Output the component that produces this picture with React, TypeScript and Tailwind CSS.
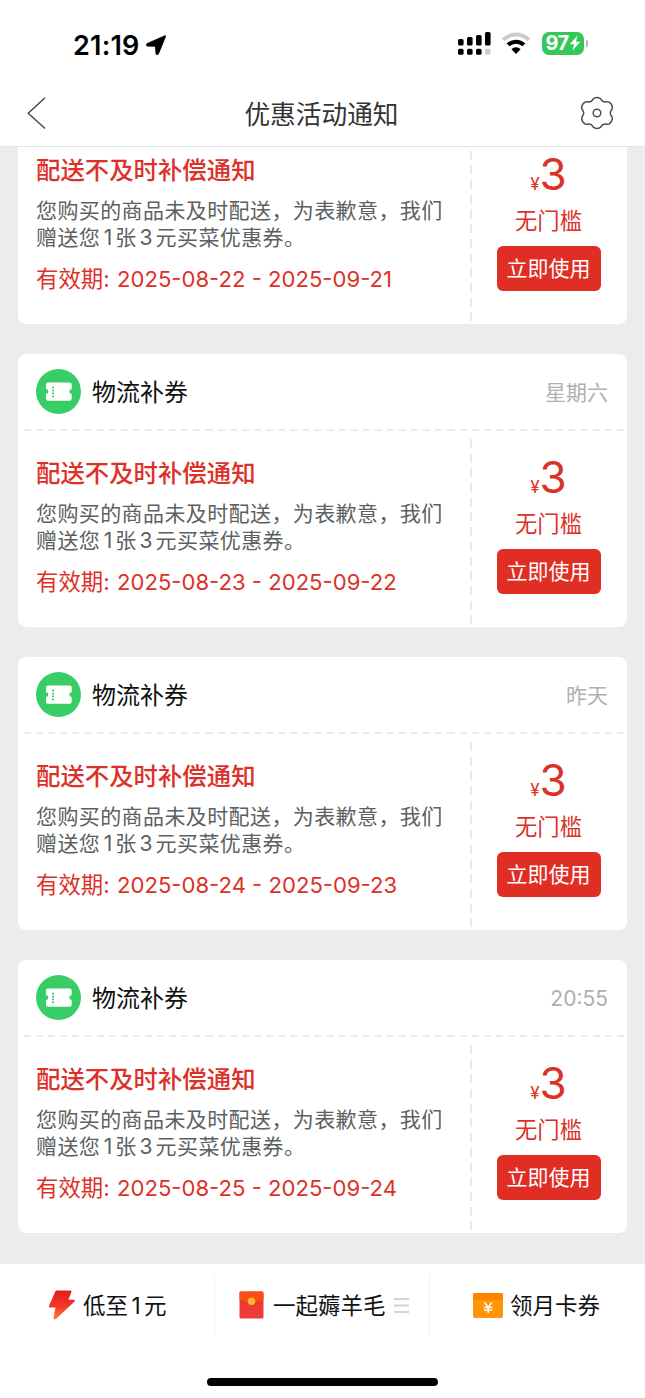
import React from "react";

type Notice = { time?: string; from: string; to: string };

const notices: Notice[] = [
  { from: "2025-08-22", to: "2025-09-21" },
  { time: "星期六", from: "2025-08-23", to: "2025-09-22" },
  { time: "昨天", from: "2025-08-24", to: "2025-09-23" },
  { time: "20:55", from: "2025-08-25", to: "2025-09-24" },
];

function StatusBar() {
  return (
    <div className="flex h-[80px] items-start justify-between bg-white pl-[73px] pr-[57px]">
      <div className="flex items-center pt-[30px]">
        <span className="w-[70px] whitespace-nowrap pt-[2px] text-[27px] font-semibold leading-[28px] tracking-[0.2px] text-black">21:19</span>
        <svg className="ml-[2px]" width="23" height="23" viewBox="0 0 23 23">
          <path d="M19.9 2.4 2.4 10.2Q1.8 11.2 3 11.4L11 11.7 11.6 19.3Q12 20.5 12.9 19.4Z" fill="#000" stroke="#000" strokeWidth="2.2" strokeLinejoin="round" />
        </svg>
      </div>
      <div className="flex items-center pt-[31px]">
        <svg width="34" height="24" viewBox="0 0 34 24">
          <g fill="#000">
            <rect x="0" y="8" width="5.6" height="6.6" rx="1.6" />
            <rect x="9" y="6" width="5.6" height="8.6" rx="1.6" />
            <rect x="18" y="4" width="5.6" height="10.6" rx="1.6" />
            <rect x="27" y="1" width="5.6" height="13.6" rx="1.6" />
            <rect x="0" y="17.8" width="5.6" height="6" rx="1.6" />
            <rect x="9" y="17.8" width="5.6" height="6" rx="1.6" />
            <rect x="18" y="17.8" width="5.6" height="6" rx="1.6" />
          </g>
          <rect x="27" y="17.8" width="5.6" height="6" rx="1.6" fill="#ccc" />
        </svg>
        <svg className="ml-[10px]" width="28" height="24" viewBox="0 0 28 24">
          <path d="M1.3 8.8A18 18 0 0 1 26.7 8.8" fill="none" stroke="#cbcbcb" strokeWidth="4" />
          <path d="M6.1 13.9A11.2 11.2 0 0 1 21.9 13.9" fill="none" stroke="#000" strokeWidth="4" />
          <path d="M14 23 9.4 18.3A6.3 6.3 0 0 1 18.6 18.3Z" fill="#000" />
        </svg>
        <div className="ml-[12px] flex h-[23px] w-[42px] items-center justify-center rounded-[7px] bg-[#34c759]">
          <span className="text-[20px] font-bold leading-[23px] tracking-[-0.6px] text-white">97</span>
          <svg width="12" height="16" viewBox="0 0 12 16">
            <path d="M8.5 .5 .8 9.3H5.2L3.5 15.5 11.3 6.7H6.9Z" fill="#fff" />
          </svg>
        </div>
        <span className="ml-[2px] h-[7px] w-[2px] rounded-r-full bg-[#b5b5b5]" />
      </div>
    </div>
  );
}

function Header() {
  return (
    <header className="flex h-[67px] items-center justify-between border-b border-[#e2e2e2] bg-white pl-[26px] pr-[31px]">
      <svg width="34" height="34" viewBox="0 0 34 34">
        <path d="M19 1.8 2.2 17.3 19 32.5" fill="none" stroke="#444" strokeWidth="1.4" />
      </svg>
      <h1 className="ml-[3px] pt-[4px] text-[25.7px] leading-[36px] text-[#333]">优惠活动通知</h1>
      <svg width="34" height="34" viewBox="0 0 34 34" fill="none" stroke="#505050" strokeWidth="1.5">
        <path d="M13.6 2.6Q17 .3 20.4 2.6C21.7 3.5 21.3 5 23.8 5.8C26 6.5 26.9 5 29.1 6.2Q32.4 8.3 32.3 12C32.2 14 30.3 14 30.3 17S32.2 20 32.3 22Q32.4 25.7 29.1 27.8C26.9 29 26 27.5 23.8 28.2C21.3 29 21.7 30.5 20.4 31.4Q17 33.7 13.6 31.4C12.3 30.5 12.7 29 10.2 28.2C8 27.5 7.1 29 4.9 27.8Q1.6 25.7 1.7 22C1.8 20 3.7 20 3.7 17S1.8 14 1.7 12Q1.6 8.3 4.9 6.2C7.1 5 8 6.5 10.2 5.8C12.7 5 12.3 3.5 13.6 2.6Z" />
        <circle cx="17" cy="17" r="3.8" />
      </svg>
    </header>
  );
}

function TicketIcon() {
  return (
    <svg width="45" height="45" viewBox="0 0 45 45">
      <circle cx="22.5" cy="22.5" r="22.5" fill="#38cd67" />
      <path d="M12 13.5H33.7A2 2 0 0 1 35.7 15.5V20.2A2.4 2.4 0 0 0 35.7 25V29.8A2 2 0 0 1 33.7 31.8H12A2 2 0 0 1 10 29.8V25A2.4 2.4 0 0 0 10 20.2V15.5A2 2 0 0 1 12 13.5Z" fill="#fff" />
      <path d="M17 17.8V28.2" stroke="#38cd67" strokeWidth="1.9" strokeDasharray="1.7 1.2" />
    </svg>
  );
}

function Card({ notice }: { notice: Notice }) {
  return (
    <article className="flex h-[273px] shrink-0 flex-col overflow-hidden rounded-[8px] bg-white">
      <div className="flex h-[75px] shrink-0 items-center pl-[18px] pr-[19px]">
        {notice.time && (
          <>
            <TicketIcon />
            <h2 className="ml-[11px] pt-[2px] text-[24px] leading-[34px] text-[#111]">物流补券</h2>
            <time className="ml-auto pt-[2px] text-[21px] leading-[30px] text-[#b0b0b0]">{notice.time}</time>
          </>
        )}
      </div>
      <div className="ml-[6px] h-[2px] shrink-0 bg-[repeating-linear-gradient(90deg,#ececec_0_7px,transparent_7px_12.1px)]" />
      <div className="flex flex-1">
        <div className="w-[452px] pl-[18px] pt-[24px]">
          <h3 className="whitespace-nowrap text-[24.4px] font-medium leading-[36px] text-[#dc3128]">配送不及时补偿通知</h3>
          <p className="mt-[9px] whitespace-nowrap text-[21px] leading-[27px] tracking-[0.4px] text-[#5d5f61]">
            您购买的商品未及时配送，为表歉意，我们
            <br />
            赠送您<span className="inline-block w-[15px] pl-px text-center">1</span>张<span className="inline-block w-[19px] text-center">3</span>元买菜优惠券。
          </p>
          <p className="mt-[12px] flex whitespace-nowrap text-[22.4px] leading-[32px] text-[#dc3128]">
            <span className="w-[81px]">有效期:</span>
            <span className="text-[22.1px]">{notice.from} - {notice.to}</span>
          </p>
        </div>
        <div className="mb-[3px] mt-[8px] w-[2px] bg-[repeating-linear-gradient(180deg,#e9e9e9_0_9px,transparent_9px_14.7px)]" />
        <div className="flex w-[153px] flex-col items-center pt-[22px] text-[#dc3128]">
          <div className="flex h-[48px] items-baseline leading-[48px]">
            <span className="text-[17px]">¥</span>
            <span className="text-[44px]">3</span>
          </div>
          <span className="mt-[7px] text-[22.3px] leading-[32px]">无门槛</span>
          <button className="mt-[9px] h-[45px] w-[104px] rounded-[6px] bg-[#e02e24] text-[21px] text-white">立即使用</button>
        </div>
      </div>
    </article>
  );
}

function BoltIcon() {
  return (
    <svg width="28" height="32" viewBox="0 0 28 32">
      <defs>
        <linearGradient id="bolt" x1="0" y1="0" x2="0" y2="1">
          <stop offset="0" stopColor="#e51b20" />
          <stop offset=".55" stopColor="#f23827" />
          <stop offset="1" stopColor="#ff7d38" />
        </linearGradient>
      </defs>
      <path d="M9 1.5H22.5Q24 1.5 23.4 3L20.5 10.8H25.5Q28 10.8 26.3 12.8L8.5 29.5Q6 31.5 5.5 29L7.5 18.5H2Q.3 18.5 1 16.8L7.3 2.6Q7.9 1.5 9 1.5Z" fill="url(#bolt)" />
    </svg>
  );
}

function EnvelopeIcon() {
  return (
    <svg width="25" height="28" viewBox="0 0 25 28">
      <defs>
        <linearGradient id="envelope" x1="0" y1="0" x2="0" y2="1">
          <stop offset="0" stopColor="#e93a28" />
          <stop offset="1" stopColor="#ee3c3c" />
        </linearGradient>
      </defs>
      <rect x=".5" y=".5" width="24" height="27" rx="1.5" fill="url(#envelope)" />
      <path d="M.5 8V2Q.5.5 2 .5H23Q24.5.5 24.5 2V8Q12.5 14 .5 8Z" fill="#fb4d16" />
      <circle cx="12.5" cy="10.3" r="3.8" fill="#ffb52e" />
    </svg>
  );
}

function CardIcon() {
  return (
    <svg width="30" height="25" viewBox="0 0 30 25">
      <rect width="30" height="25" rx="2" fill="#ff9609" />
      <path d="M0 7V2A2 2 0 0 1 2 0H28A2 2 0 0 1 30 2V7Z" fill="#ff8200" />
      <path d="M11.5 9.5 15.2 14.2 18.9 9.5M15.2 14.2V20M11 14.5H19.4M11 17.2H19.4" fill="none" stroke="#fff" strokeWidth="1.3" />
    </svg>
  );
}

export default function App() {
  return (
    <main className="flex h-[1398px] w-[645px] flex-col overflow-hidden bg-[#ececec] font-['Inter','Noto_Sans_CJK_SC',sans-serif]">
      <StatusBar />
      <Header />
      <section className="flex h-[1117px] shrink-0 flex-col justify-end gap-[30px] overflow-hidden px-[18px] pb-[31px]">
        {notices.map((notice) => (
          <Card key={notice.from} notice={notice} />
        ))}
      </section>
      <footer className="flex flex-1 flex-col items-center bg-white">
        <nav className="flex h-[82px] w-full items-center text-[22.5px] text-[#111]">
          <div className="flex h-[64px] w-[215px] items-center border-r border-[#f4f4f4] pl-[48px]">
            <BoltIcon />
            <span className="ml-[7px] whitespace-nowrap pt-px">低至<span className="inline-block w-[16px] text-center">1</span>元</span>
          </div>
          <div className="flex h-[64px] w-[215px] items-center border-r border-[#f4f4f4] pl-[24px]">
            <EnvelopeIcon />
            <span className="ml-[9px] whitespace-nowrap pt-px">一起薅羊毛</span>
            <svg className="ml-[8px]" width="15" height="15" viewBox="0 0 15 15">
              <path d="M0 1H15M0 7.5H15M0 14H15" stroke="#d4d4d4" strokeWidth="1.8" />
            </svg>
          </div>
          <div className="flex h-[64px] flex-1 items-center pl-[43px]">
            <CardIcon />
            <span className="ml-[7px] whitespace-nowrap pt-px">领月卡券</span>
          </div>
        </nav>
        <div className="mt-[32px] h-[8px] w-[231px] rounded-full bg-black" />
      </footer>
    </main>
  );
}
